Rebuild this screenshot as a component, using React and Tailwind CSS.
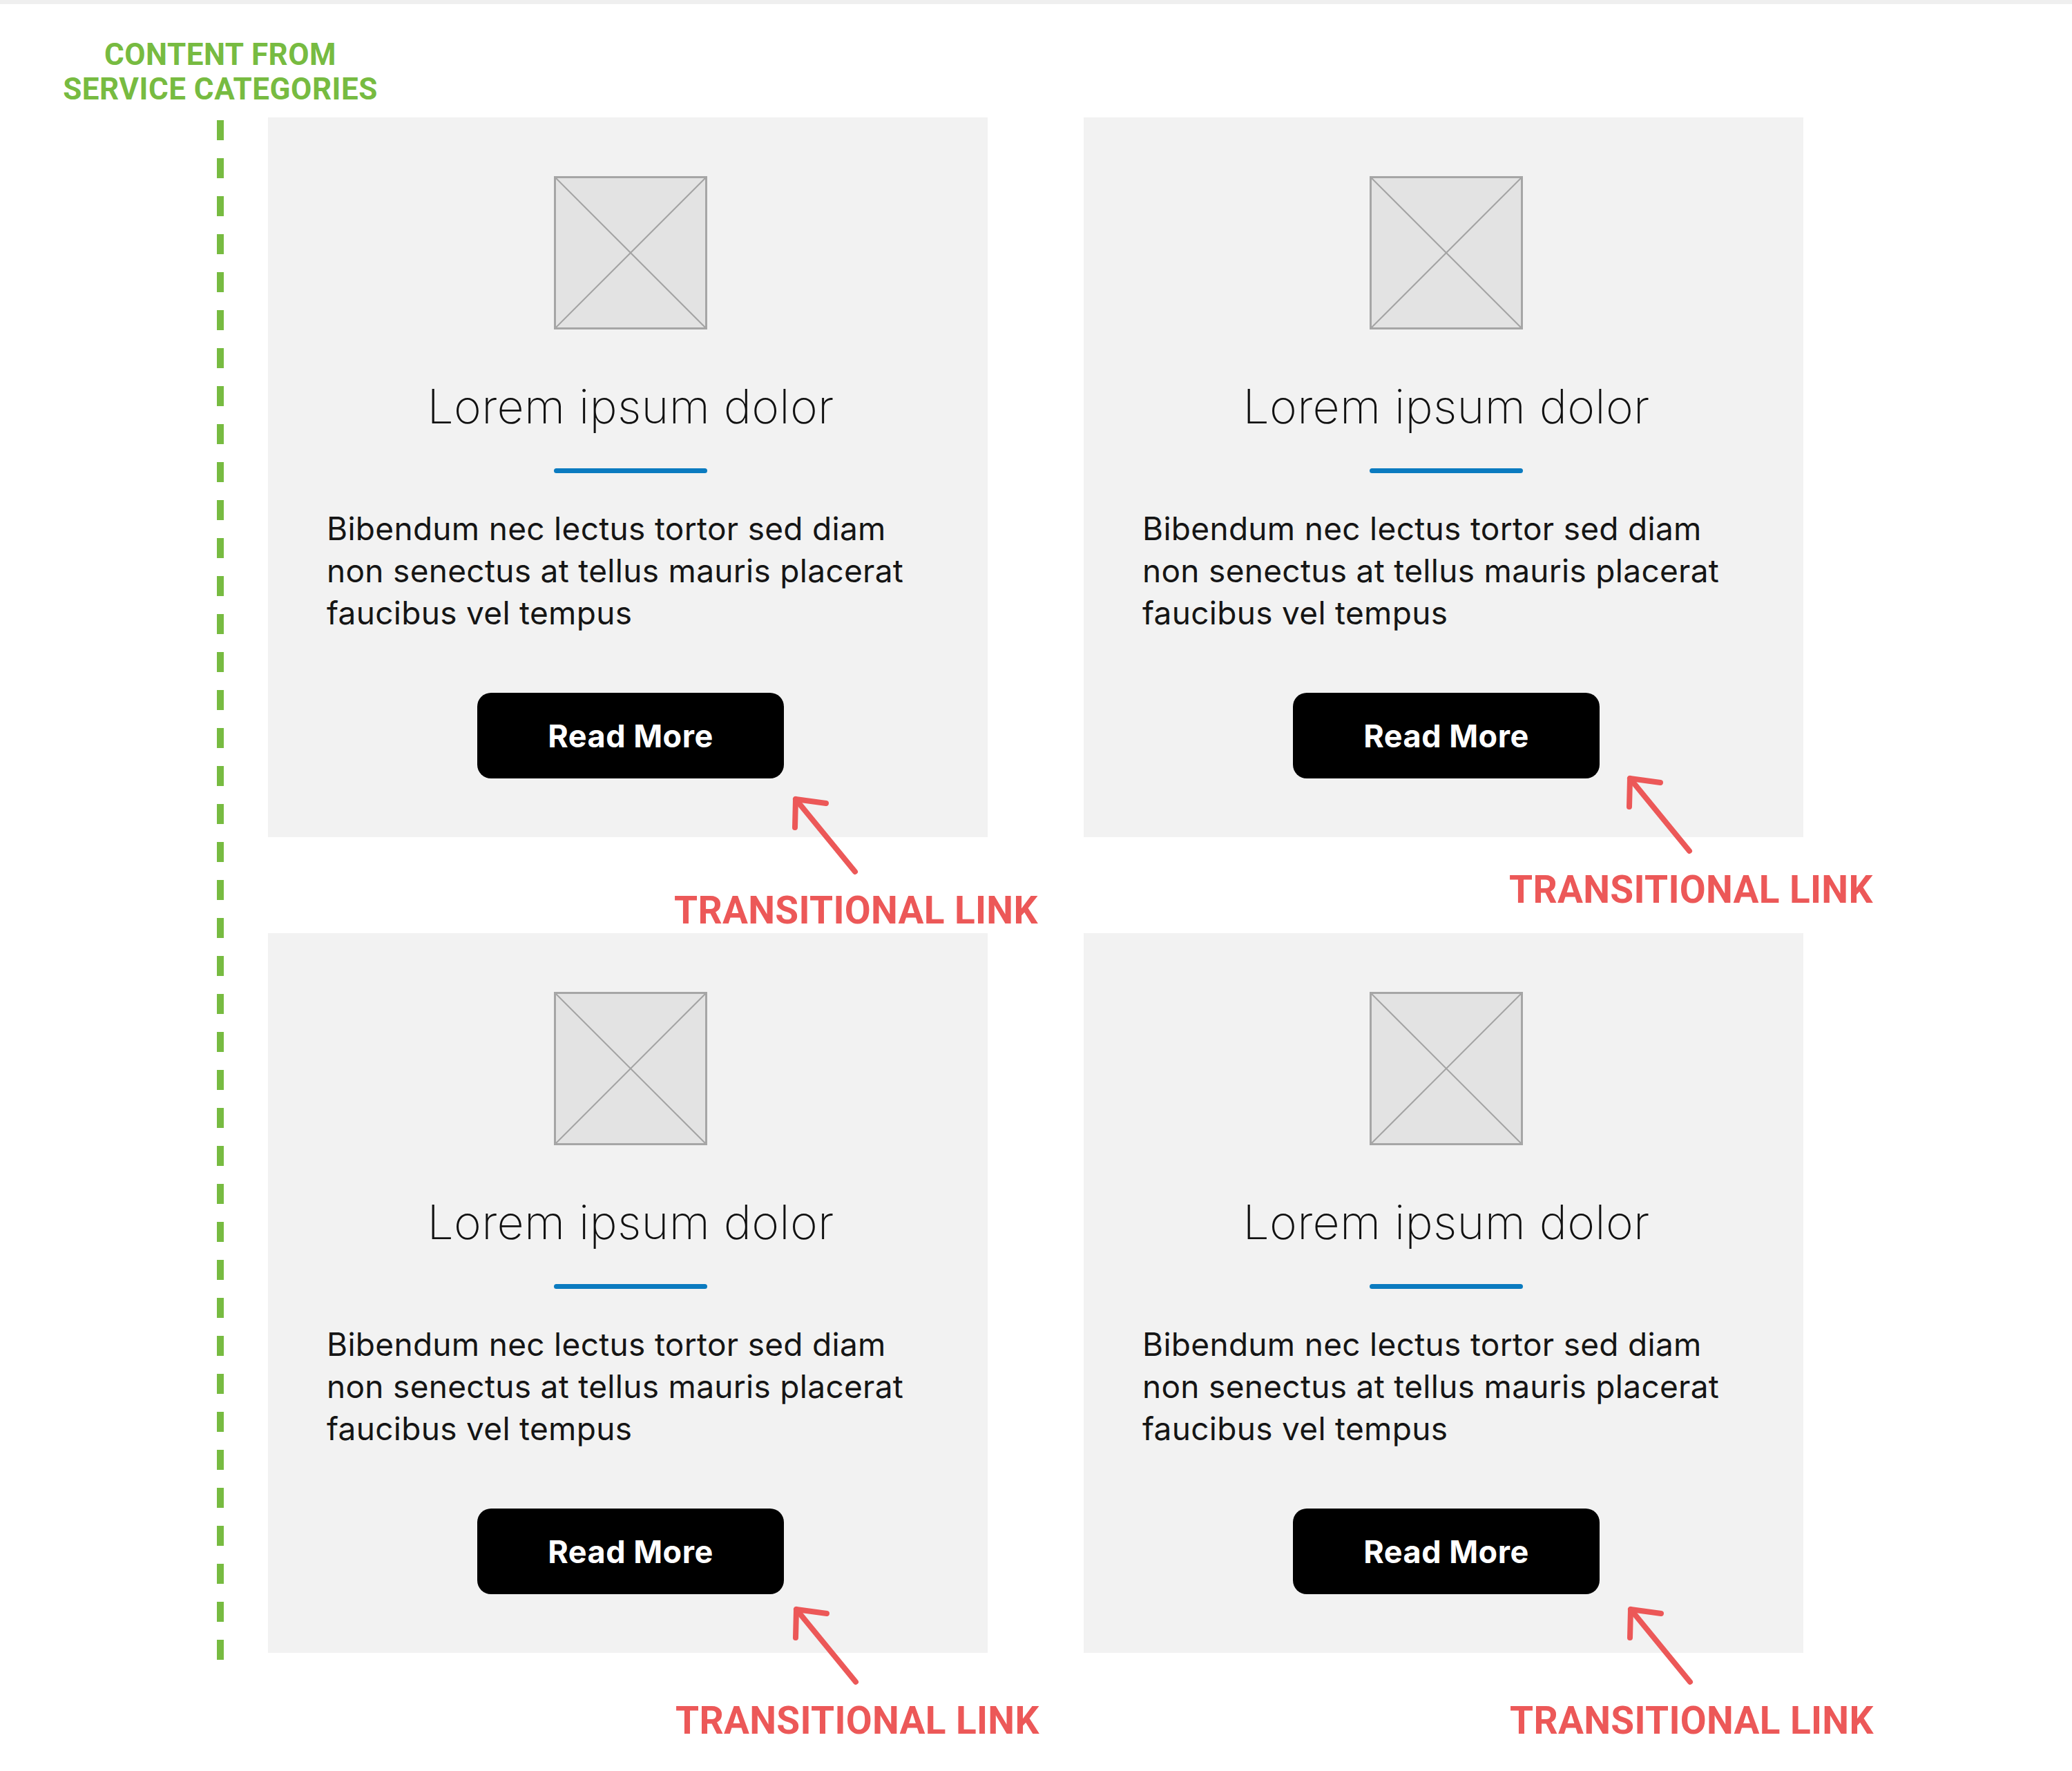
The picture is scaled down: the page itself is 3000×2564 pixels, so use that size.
import React from 'react';

const cards = [
  { arrow: 'left-[754px] top-[979px]', label: 'left-[588px] top-[1121px]' },
  { arrow: 'left-[781px] top-[949px]', label: 'left-[616px] top-[1091px]' },
  { arrow: 'left-[755px] top-[971px]', label: 'left-[590px] top-[1113px]' },
  { arrow: 'left-[782px] top-[971px]', label: 'left-[617px] top-[1113px]' },
];

function Placeholder() {
  return (
    <svg width="222" height="222" viewBox="0 0 222 222" className="shrink-0">
      <rect x="1.5" y="1.5" width="219" height="219" fill="#e3e3e3" stroke="#a6a6a6" strokeWidth="3" />
      <line x1="3" y1="3" x2="219" y2="219" stroke="#a3a3a3" strokeWidth="2" />
      <line x1="219" y1="3" x2="3" y2="219" stroke="#a3a3a3" strokeWidth="2" />
    </svg>
  );
}

function Arrow({ className }) {
  return (
    <svg width="110" height="125" viewBox="0 0 110 125" className={`absolute ${className}`}>
      <g stroke="#ec5858" strokeWidth="8" strokeLinecap="round" strokeLinejoin="round" fill="none">
        <line x1="10" y1="8" x2="96" y2="113" />
        <polyline points="54,14 10,8 9,49" />
      </g>
    </svg>
  );
}

function Card({ arrow, label }) {
  return (
    <div className="relative w-[1042px] h-[1042px] bg-[#f2f2f2] flex flex-col items-center pl-[8px] pt-[85px] font-['Inter',sans-serif]">
      <Placeholder />
      <h3 className="mt-[77px] text-[68px] leading-none font-extralight tracking-[0.3px] text-[#111]">Lorem ipsum dolor</h3>
      <div className="mt-[56px] w-[222px] h-[7px] rounded-full bg-[#0b7bc0]" />
      <p className="mt-[50px] self-start ml-[77px] w-[880px] text-[46px] leading-[61px] tracking-[0.3px] font-normal text-[#151515]">
        Bibendum nec lectus tortor sed diam non senectus at tellus mauris placerat faucibus vel tempus
      </p>
      <button className="mt-[85px] w-[444px] h-[124px] rounded-[20px] bg-black text-white text-[45px] tracking-[0.5px] font-bold leading-none">
        Read More
      </button>
      <Arrow className={arrow} />
      <div className={`absolute ${label} whitespace-nowrap font-['Roboto',sans-serif] font-bold text-[55px] tracking-[0.3px] leading-none text-[#ec5858]`}>
        TRANSITIONAL LINK
      </div>
    </div>
  );
}

export default function App() {
  return (
    <div className="w-[3000px] h-[2564px] bg-white overflow-hidden">
      <div className="h-[6px] bg-[#efefef]" />
      <div className="w-[638px] pt-[48px] text-center font-['Roboto',sans-serif] font-bold text-[44px] tracking-[0.5px] leading-[50px] text-[#77bb41]">
        CONTENT FROM
        <br />
        SERVICE CATEGORIES
      </div>
      <div className="flex items-start mt-[16px]">
        <div className="w-[388px] shrink-0 pl-[314px] pt-[4px]">
          <svg width="10" height="2229" viewBox="0 0 10 2229">
            <line x1="5" y1="0" x2="5" y2="2229" stroke="#77bb41" strokeWidth="10" strokeDasharray="29 26" />
          </svg>
        </div>
        <div className="grid grid-cols-[1042px_1042px] content-start gap-[139px]">
          {cards.map((c, i) => (
            <Card key={i} {...c} />
          ))}
        </div>
      </div>
    </div>
  );
}
